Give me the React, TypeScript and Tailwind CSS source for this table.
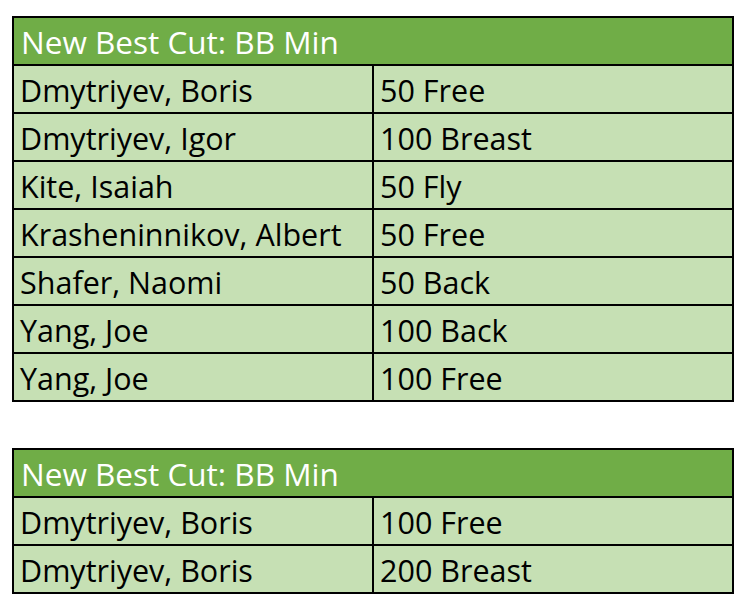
import React from 'react';

type Row = { name: string; event: string };

const tables: { title: string; rows: Row[] }[] = [
  {
    title: 'New Best Cut: BB Min',
    rows: [
      { name: 'Dmytriyev, Boris', event: '50 Free' },
      { name: 'Dmytriyev, Igor', event: '100 Breast' },
      { name: 'Kite, Isaiah', event: '50 Fly' },
      { name: 'Krasheninnikov, Albert', event: '50 Free' },
      { name: 'Shafer, Naomi', event: '50 Back' },
      { name: 'Yang, Joe', event: '100 Back' },
      { name: 'Yang, Joe', event: '100 Free' },
    ],
  },
  {
    title: 'New Best Cut: BB Min',
    rows: [
      { name: 'Dmytriyev, Boris', event: '100 Free' },
      { name: 'Dmytriyev, Boris', event: '200 Breast' },
    ],
  },
];

const CutTable: React.FC<{ title: string; rows: Row[] }> = ({ title, rows }) => (
  <div className="w-[722px] border-2 border-black">
    {/* Header */}
    <div className="h-[46px] bg-[#70ad47] pl-[7px] pt-[2px] flex items-center text-white text-[31.5px] leading-none">
      {title}
    </div>
    {rows.map((r, i) => (
      <div key={i} className="grid grid-cols-[358px_1fr] border-t-2 border-black bg-[#c6e0b4] text-black text-[30.5px] leading-none">
        <div className="h-[46px] pl-[6px] pt-[2px] flex items-center whitespace-nowrap">{r.name}</div>
        <div className="h-[46px] pl-[6px] pt-[2px] flex items-center border-l-2 border-black whitespace-nowrap">{r.event}</div>
      </div>
    ))}
  </div>
);

export default function App() {
  return (
    <div className="w-[744px] h-[610px] bg-white pl-[12px] pt-[16px] flex flex-col gap-[46px] font-['Open_Sans','Lato',sans-serif]">
      {tables.map((t, i) => (
        <CutTable key={i} title={t.title} rows={t.rows} />
      ))}
    </div>
  );
}
